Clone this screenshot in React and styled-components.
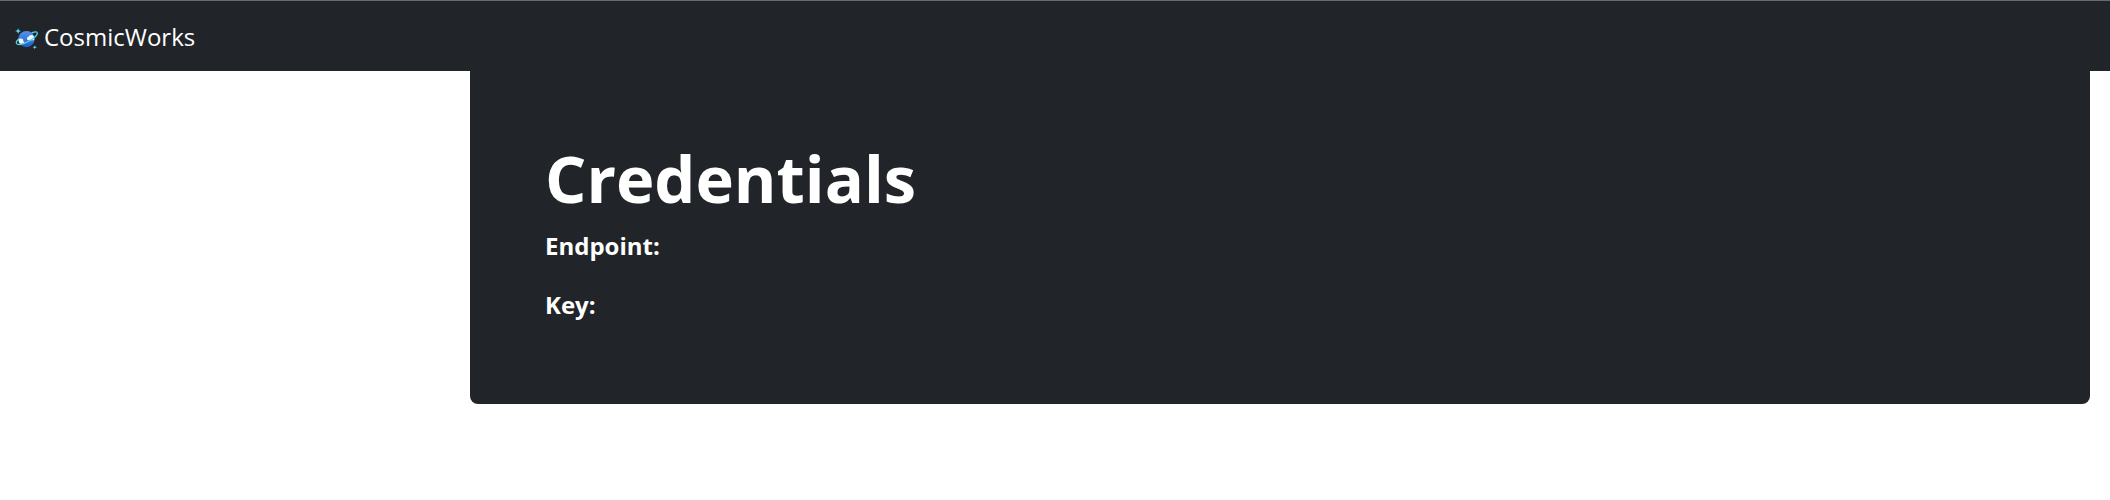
import React from "react";
import styled, { createGlobalStyle } from "styled-components";

const GlobalStyle = createGlobalStyle`
  *, *::before, *::after { box-sizing: border-box; }
  body {
    margin: 0;
    background: #ffffff;
    color: #ffffff;
    font-family: "Segoe UI", "Open Sans", "Noto Sans", sans-serif;
    font-size: 24px;
    line-height: 36px;
  }
`;

const Navbar = styled.header`
  display: flex;
  align-items: center;
  height: 71px;
  padding: 2px 15px 0;
  background: #212529;
  border-top: 1px solid #6b6b6b;
`;

const Brand = styled.a`
  display: flex;
  align-items: center;
  gap: 6px;
  color: #ffffff;
  text-decoration: none;
`;

const BrandIcon = styled.svg`
  width: 23px;
  height: 23px;
  margin-top: 4px;
`;

const Main = styled.main`
  padding: 0 20px 0 470px;
`;

const Panel = styled.section`
  padding: 65px 75px 81px;
  background: #212529;
  border-radius: 0 0 8px 8px;
`;

const Title = styled.h1`
  margin: 0 0 8px;
  font-size: 65px;
  font-weight: 700;
  line-height: 84px;
`;

const Credentials = styled.dl`
  display: flex;
  flex-direction: column;
  gap: 23px;
  margin: 0;
`;

const Field = styled.div`
  display: flex;
`;

const Label = styled.dt`
  font-weight: 700;
`;

const Value = styled.dd`
  margin: 0;
`;

function CosmosIcon() {
  return (
    <BrandIcon viewBox="0 0 22 22" aria-hidden="true">
      <defs>
        <linearGradient id="planet" x1="0" y1="0" x2="0" y2="1">
          <stop offset="0" stopColor="#5494ee" />
          <stop offset="1" stopColor="#1f5fc4" />
        </linearGradient>
      </defs>
      <circle cx="11" cy="10.6" r="7.8" fill="url(#planet)" />
      <path d="M3.300 11.500C4 10 5.500 9.700 6.500 10.400C7.800 10.600 8.200 11.800 7.800 12.600C9.400 13 9.500 14.800 8.200 15.400H5.200C4.100 14.500 3.400 13.200 3.300 11.500Z" fill="#f4f7fb" />
      <path d="M12.400 11.600C10.900 11 11.200 8.600 12.900 8.700C13.200 7 15.400 6.100 17 6.900C18.300 8.200 18.600 10 18.300 11.600Z" fill="#f4f7fb" />
      <path d="M16.300 4.400C18.900 3.500 20.800 3.500 21.200 4.400C22.200 6.200 18.600 9.900 13.200 12.700S2.600 16.600 1.500 14.800C.9 13.900 1.600 12.200 3.500 10.500" fill="none" stroke="#50d5ec" strokeWidth="1.200" strokeLinecap="round" />
      <path d="M3 0C3.300 1.900 3.900 2.500 6 2.900C3.900 3.300 3.300 4 3 6C2.700 4 2.100 3.300 0 2.900C2.100 2.500 2.700 1.900 3 0Z" fill="#50d5ec" />
      <path d="M18.900 16.200C19.100 17.600 19.600 18.100 21.100 18.400C19.600 18.700 19.100 19.200 18.900 20.600C18.700 19.200 18.200 18.700 16.700 18.400C18.200 18.100 18.700 17.600 18.900 16.200Z" fill="#50d5ec" />
    </BrandIcon>
  );
}

export default function App() {
  return (
    <>
      <GlobalStyle />
      <Navbar>
        <Brand href="#">
          <CosmosIcon />
          CosmicWorks
        </Brand>
      </Navbar>
      <Main>
        <Panel>
          <Title>Credentials</Title>
          <Credentials>
            <Field>
              <Label>Endpoint:</Label>
              <Value />
            </Field>
            <Field>
              <Label>Key:</Label>
              <Value />
            </Field>
          </Credentials>
        </Panel>
      </Main>
    </>
  );
}
